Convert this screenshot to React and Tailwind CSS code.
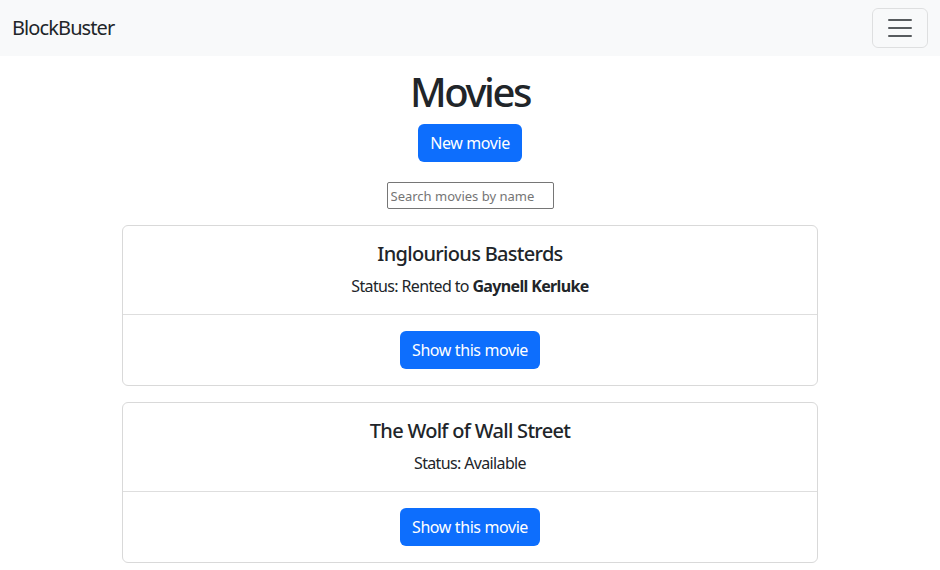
import React from "react";

const font = { fontFamily: '"Noto Sans", "Open Sans", sans-serif' };

function MovieCard({ title, children }) {
  return (
    <div className="border border-[#d9d9d9] rounded-[6px] bg-white text-center">
      <div className="px-4 pt-4 pb-4">
        <h5 className="text-[20px] leading-[24px] font-medium mb-2 tracking-[-0.035em]">{title}</h5>
        <p className="text-[16px] leading-[24px] tracking-[-0.04em]">{children}</p>
      </div>
      <div className="border-t border-[#dedede] px-4 py-4 flex justify-center">
        <button className="bg-[#0d6efd] text-white text-[16px] leading-[24px] px-3 py-[7px] rounded-[6px] tracking-[-0.025em]">
          Show this movie
        </button>
      </div>
    </div>
  );
}

export default function App() {
  return (
    <div className="min-h-[570px] bg-white text-[#212529]" style={font}>
      <nav className="h-[56px] bg-[#f8f9fa] flex items-center justify-between px-3">
        <span className="text-[20px] leading-[30px] tracking-[-0.045em]">BlockBuster</span>
        <button className="w-[56px] h-[40px] border border-[rgba(0,0,0,0.1)] rounded-[6px] flex items-center justify-center">
          <svg width="30" height="30" viewBox="0 0 30 30">
            <path d="M4 7h22M4 15h22M4 23h22" stroke="rgba(33,37,41,0.75)" strokeWidth="2" strokeLinecap="round" />
          </svg>
        </button>
      </nav>
      <main className="w-[720px] mx-auto px-3 pt-3">
        <div className="flex flex-col items-center">
          <h1 className="text-[40px] leading-[48px] font-medium mb-2 tracking-[-0.06em]">Movies</h1>
          <button className="bg-[#0d6efd] text-white text-[16px] leading-[24px] px-3 py-[7px] rounded-[6px] tracking-[-0.025em]">
            New movie
          </button>
          <input
            className="mt-[20px] w-[167px] h-[27px] border border-[#767676] rounded-[2px] px-[3px] text-[13px] placeholder:text-[#757575]"
            placeholder="Search movies by name"
          />
        </div>
        <div className="mt-[16px] flex flex-col gap-4">
          <MovieCard title="Inglourious Basterds">
            Status: Rented to <b className="font-bold">Gaynell Kerluke</b>
          </MovieCard>
          <MovieCard title="The Wolf of Wall Street">Status: Available</MovieCard>
        </div>
      </main>
    </div>
  );
}
